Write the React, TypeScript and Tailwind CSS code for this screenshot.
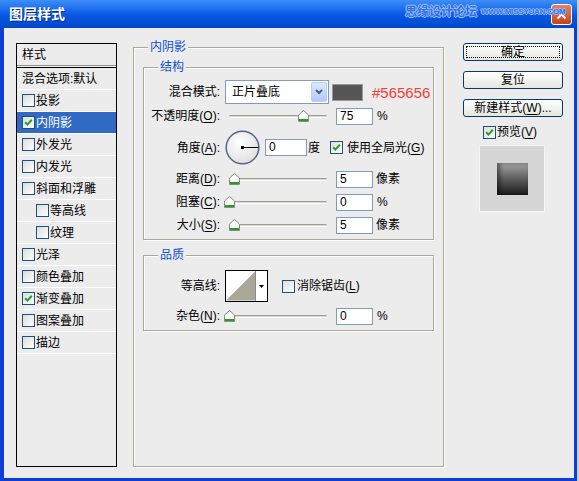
import React from 'react';

const F = "font-['Liberation_Sans','Noto_Sans_CJK_SC',sans-serif]";

const Mn = ({ k }: { k: string }) => (
  <>
    (<span className="underline underline-offset-2">{k}</span>)
  </>
);

const Check = ({ checked }: { checked?: boolean }) => (
  <span className="flex h-[13px] w-[13px] shrink-0 items-center justify-center border border-[#1c5180] bg-linear-to-br from-[#dcdcd7] to-white">
    {checked && (
      <svg width="9" height="9" viewBox="0 0 9 9">
        <path d="M1.2 4.2 L3.4 6.6 L7.8 1.8" stroke="#21a121" strokeWidth="2" fill="none" />
      </svg>
    )}
  </span>
);

const Input = ({ value, w = 'w-[37px]' }: { value: string; w?: string }) => (
  <div className={`${w} h-[17px] shrink-0 border border-[#7f9db9] bg-white pl-[3px] text-[12px] leading-[15px]`}>{value}</div>
);

const Slider = ({ thumb }: { thumb: number }) => (
  <div className="relative h-[14px] w-[104px] shrink-0">
    <div className="absolute left-[4px] right-[2px] top-[6px] h-[3px] rounded-full border-t border-b border-t-[#9d9d92] border-b-white bg-[#dcdad0]" />
    <svg className="absolute top-[1px]" style={{ left: thumb - 5 }} width="11" height="12" viewBox="0 0 11 12">
      <path d="M0.5 5 L5.5 0.5 L10.5 5 L10.5 11.5 L0.5 11.5 Z" fill="#fbfbf9" stroke="#8a8a80" />
      <rect x="1" y="9" width="9" height="2" fill="#21a121" />
    </svg>
  </div>
);

const Label = ({ children }: { children: React.ReactNode }) => (
  <span className="w-[76px] shrink-0 text-right text-[12px] leading-none">{children}</span>
);

const Legend = ({ children }: { children: React.ReactNode }) => (
  <span className="-mt-[9px] ml-[14px] w-fit bg-[#ececec] px-[2px] text-[12px] leading-[16px] text-[#0f4fd0]">{children}</span>
);

const box = 'flex flex-col border border-[#aca899] shadow-[inset_1px_1px_0_#fff,1px_1px_0_#fff]';

const Btn = ({ children, def }: { children: React.ReactNode; def?: boolean }) => (
  <div className="relative flex h-[18px] w-[100px] items-center justify-center rounded-[3px] border border-[#003c74] bg-linear-to-b from-white to-[#e6e5df] text-[12px] leading-none">
    {def && <span className="absolute inset-[2px] border border-dotted border-black" />}
    {children}
  </div>
);

const items: { t: string; c?: boolean; sel?: boolean; ind?: boolean }[] = [
  { t: '投影' },
  { t: '内阴影', c: true, sel: true },
  { t: '外发光' },
  { t: '内发光' },
  { t: '斜面和浮雕' },
  { t: '等高线', ind: true },
  { t: '纹理', ind: true },
  { t: '光泽' },
  { t: '颜色叠加' },
  { t: '渐变叠加', c: true },
  { t: '图案叠加' },
  { t: '描边' },
];

const App: React.FC = () => {
  return (
    <div className={`flex h-[481px] w-[579px] bg-[#c9cdd8] ${F}`}>
      <div className="flex h-[481px] w-[577px] flex-col bg-[#0b3fd6]">
        {/* Title bar */}
        <div className="relative flex h-[28px] shrink-0 items-center bg-linear-to-b from-[#3d8ef7] via-[#0a5ae6] to-[#0048cc]">
          <span className="ml-[9px] text-[14px] font-bold text-white [text-shadow:1px_1px_0_#0a2a8a]">图层样式</span>
          <div className="ml-auto mr-[5px] flex h-[21px] w-[21px] items-center justify-center rounded-[3px] border border-white bg-linear-to-b from-[#e9815e] to-[#c8401a]">
            <svg width="11" height="11" viewBox="0 0 11 11">
              <path d="M1.5 1.5 L9.5 9.5 M9.5 1.5 L1.5 9.5" stroke="white" strokeWidth="2" />
            </svg>
          </div>
          <div className="absolute left-[405px] top-[6px] flex items-center gap-[4px]">
            <span className="text-[12px] font-bold leading-none text-[#2f6fe2] [text-shadow:1px_0_#9cc0ff,-1px_0_#9cc0ff,0_1px_#9cc0ff,0_-1px_#9cc0ff]">思缘设计论坛</span>
            <span className="text-[8px] font-bold leading-none tracking-[-0.2px] text-[#2f6fe2] [text-shadow:1px_0_#9cc0ff,-1px_0_#9cc0ff,0_1px_#9cc0ff,0_-1px_#9cc0ff]">WWW.MISSYUAN.COM</span>
          </div>
        </div>

        {/* Client */}
        <div className="ml-[4px] mr-[3px] mb-[3px] flex flex-1 bg-[#ececec] pl-[12px] pt-[15px]">
          {/* Style list */}
          <div className="flex h-[424px] w-[101px] shrink-0 flex-col border border-black text-[12px]">
            <div className="flex h-[21px] items-center pl-[5px]">样式</div>
            <div className="h-[3px] border-t border-b border-t-[#8e8e8e] border-b-black bg-[#f4f4f4]" />
            <div className="flex h-[22px] items-center border-b border-white pl-[5px]">混合选项:默认</div>
            {items.map((it) => (
              <div
                key={it.t}
                className={`flex h-[22px] items-center gap-[1px] border-b border-white ${it.ind ? 'pl-[19px]' : 'pl-[5px]'} ${it.sel ? 'bg-[#316ac5] text-white' : ''}`}
              >
                <Check checked={it.c} />
                <span>{it.t}</span>
              </div>
            ))}
          </div>

          {/* Inner shadow group */}
          <div className={`${box} ml-[16px] mt-[4px] h-[420px] w-[311px] shrink-0`}>
            <Legend>内阴影</Legend>

            <div className={`${box} mx-[9px] mt-[12px] pb-[4px]`}>
              <Legend>结构</Legend>
              <div className="mt-[5px] flex h-[24px] items-center">
                <Label>混合模式:</Label>
                <div className="ml-[5px] flex h-[24px] w-[104px] items-center border border-[#7f9db9] bg-white">
                  <span className="ml-[6px] text-[12px]">正片叠底</span>
                  <div className="ml-auto mr-[1px] flex h-[20px] w-[16px] items-center justify-center rounded-[2px] border border-[#b9cff7] bg-linear-to-b from-[#dce7fd] to-[#b3c9f6]">
                    <svg width="8" height="6" viewBox="0 0 8 6">
                      <path d="M1 1 L4 4 L7 1" stroke="#4d6185" strokeWidth="2" fill="none" />
                    </svg>
                  </div>
                </div>
                <div className="ml-[3px] h-[17px] w-[31px] border border-[#9a9a9a] bg-[#565656]" />
                <span className="ml-[9px] text-[15px] leading-none text-[#f43c3c]">#565656</span>
              </div>

              <div className="mt-[2px] flex h-[20px] items-center">
                <Label>
                  不透明度<Mn k="O" />:
                </Label>
                <div className="ml-[5px]">
                  <Slider thumb={78} />
                </div>
                <div className="ml-[7px]">
                  <Input value="75" />
                </div>
                <span className="ml-[4px] text-[12px]">%</span>
              </div>

              <div className="mt-[4px] flex h-[35px] items-center">
                <Label>
                  角度<Mn k="A" />:
                </Label>
                <svg className="ml-[5px] shrink-0" width="35" height="35" viewBox="0 0 35 35">
                  <defs>
                    <radialGradient id="dg" cx="0.4" cy="0.35" r="0.7">
                      <stop offset="0" stopColor="#ffffff" />
                      <stop offset="1" stopColor="#dedede" />
                    </radialGradient>
                  </defs>
                  <circle cx="17.5" cy="17.5" r="16.3" fill="url(#dg)" stroke="#55648a" strokeWidth="1.5" />
                  <line x1="17.5" y1="17.5" x2="33.5" y2="17.5" stroke="black" strokeWidth="1" />
                  <rect x="16" y="16" width="3" height="3" fill="black" />
                </svg>
                <div className="ml-[5px]">
                  <Input value="0" w="w-[42px]" />
                </div>
                <span className="ml-[1px] text-[12px]">度</span>
                <div className="ml-[10px]">
                  <Check checked />
                </div>
                <span className="ml-[4px] text-[12px]">
                  使用全局光<Mn k="G" />
                </span>
              </div>

              {[
                { l: '距离', k: 'D', t: 9, v: '5', u: '像素' },
                { l: '阻塞', k: 'C', t: 4, v: '0', u: '%' },
                { l: '大小', k: 'S', t: 9, v: '5', u: '像素' },
              ].map((r, i) => (
                <div key={r.l} className={`${i === 0 ? 'mt-[4px]' : 'mt-[3px]'} flex h-[20px] items-center`}>
                  <Label>
                    {r.l}
                    <Mn k={r.k} />:
                  </Label>
                  <div className="ml-[5px]">
                    <Slider thumb={r.t} />
                  </div>
                  <div className="ml-[7px]">
                    <Input value={r.v} />
                  </div>
                  <span className={`${r.u === '%' ? 'ml-[4px]' : 'ml-[3px]'} text-[12px]`}>{r.u}</span>
                </div>
              ))}
            </div>

            <div className={`${box} mx-[9px] mt-[15px] pb-[4px]`}>
              <Legend>品质</Legend>
              <div className="mt-[7px] flex h-[32px] items-center">
                <Label>等高线:</Label>
                <div className="ml-[5px] flex h-[32px] w-[43px] border border-black bg-white">
                  <svg width="30" height="30" viewBox="0 0 30 30" className="border-r border-[#8a8a8a]">
                    <polygon points="0,30 30,0 30,30" fill="#aaa79a" />
                  </svg>
                  <div className="flex flex-1 items-center justify-center">
                    <svg width="5" height="3" viewBox="0 0 5 3">
                      <polygon points="0,0 5,0 2.5,3" fill="black" />
                    </svg>
                  </div>
                </div>
                <div className="ml-[14px]">
                  <Check />
                </div>
                <span className="ml-[2px] text-[12px]">
                  消除锯齿<Mn k="L" />
                </span>
              </div>
              <div className="mt-[4px] flex h-[20px] items-center">
                <Label>
                  杂色<Mn k="N" />:
                </Label>
                <div className="ml-[5px]">
                  <Slider thumb={4} />
                </div>
                <div className="ml-[7px]">
                  <Input value="0" />
                </div>
                <span className="ml-[4px] text-[12px]">%</span>
              </div>
            </div>
          </div>

          {/* Buttons */}
          <div className="ml-[19px] flex w-[100px] shrink-0 flex-col">
            <Btn def>确定</Btn>
            <div className="mt-[10px]">
              <Btn>复位</Btn>
            </div>
            <div className="mt-[10px]">
              <Btn>
                新建样式<Mn k="W" />...
              </Btn>
            </div>
            <div className="mt-[8px] flex h-[14px] items-center pl-[20px]">
              <Check checked />
              <span className="ml-[1px] text-[12px]">
                预览<Mn k="V" />
              </span>
            </div>
            <div className="ml-[16px] mt-[6px] flex h-[67px] w-[66px] items-center justify-center border border-[#f6f6f6] bg-[#d6d6d6]">
              <div className="h-[32px] w-[31px] bg-linear-to-b from-[#a6a6a6] to-[#1c1c1c] shadow-[inset_3px_0_4px_rgba(0,0,0,0.45)]" />
            </div>
          </div>
        </div>
      </div>
    </div>
  );
};

export default App;
